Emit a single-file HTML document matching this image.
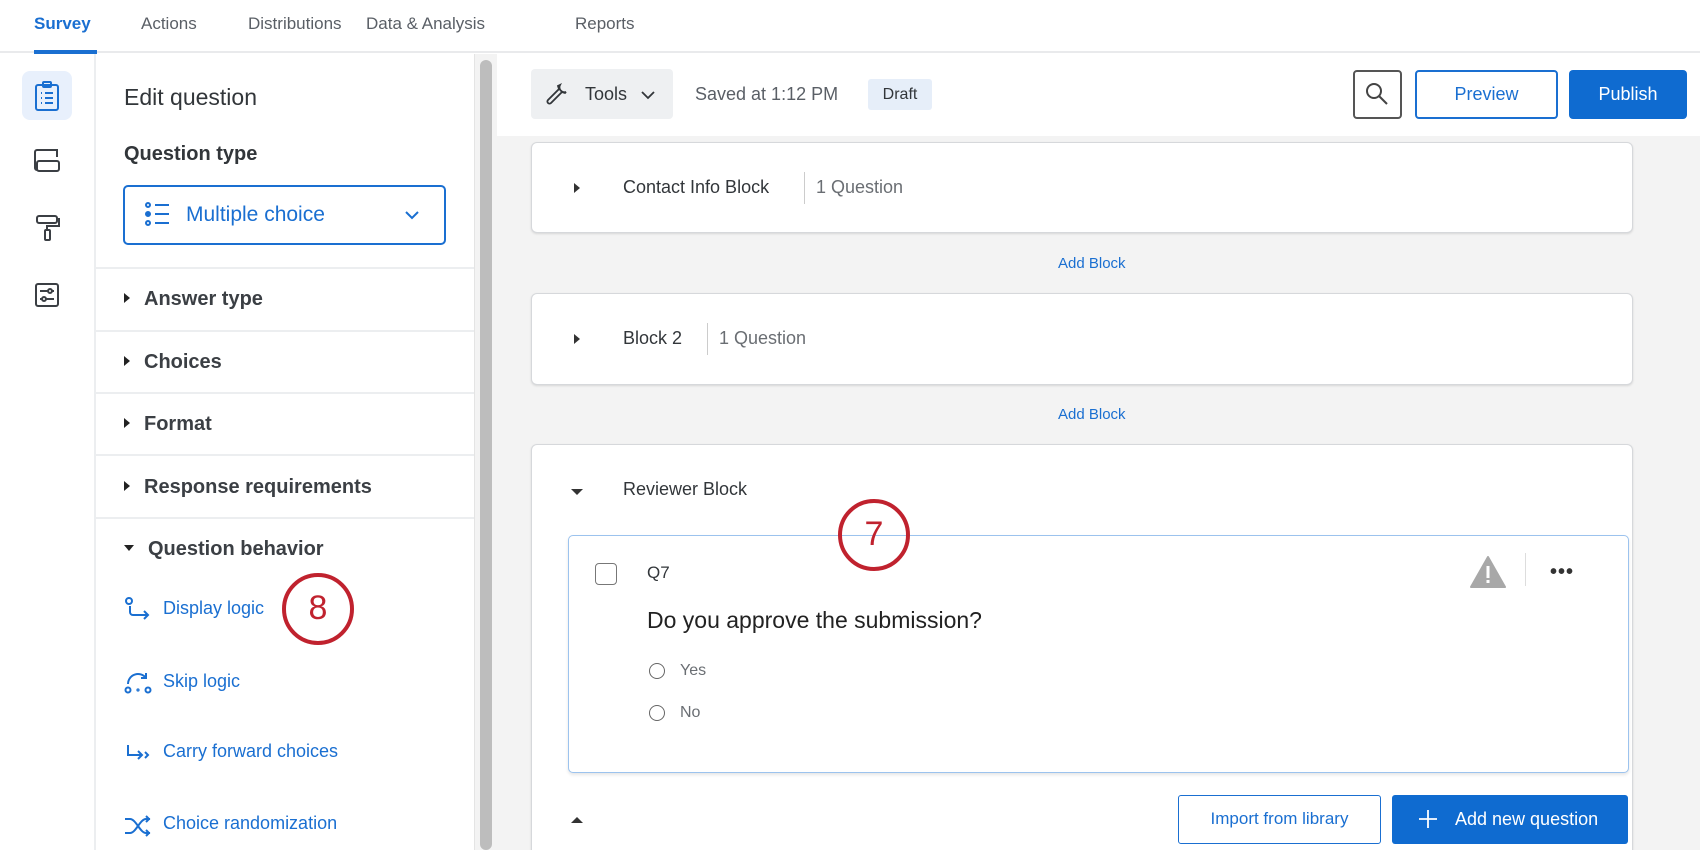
<!DOCTYPE html>
<html><head><meta charset="utf-8"><style>
*{box-sizing:border-box;margin:0;padding:0}
html,body{width:1700px;height:850px;overflow:hidden}
body{background:#fff;font-family:"Liberation Sans",sans-serif;color:#32363a;position:relative}
.a{position:absolute}
.tab{position:absolute;top:14px;font-size:17px;color:#5a5f66}
.blue{color:#1a6fd1}
.row{position:absolute;left:124px;font-size:20px;font-weight:bold;color:#3b3f44}
.tri{display:inline-block;width:0;height:0;border-top:5px solid transparent;border-bottom:5px solid transparent;border-left:6px solid #222;margin-right:14px;vertical-align:2px}
.sep{position:absolute;left:95px;width:379px;height:2px;background:#eceef0}
.link{position:absolute;left:163px;font-size:18px;color:#1a6fd1}
.block{position:absolute;left:531px;width:1102px;background:#fff;border:1px solid #d6d8db;border-radius:6px;box-shadow:0 1px 2px rgba(0,0,0,.12)}
.bt{position:absolute;font-size:18px;color:#32363a}
.addb{position:absolute;left:1058px;font-size:15px;color:#1a6fd1}
.circ{position:absolute;width:72px;height:72px;border:4px solid #c0222e;border-radius:50%;color:#c0222e;font-size:34px;text-align:center;line-height:62px;background:transparent}
</style></head><body>
<div class="a" style="left:0;top:0;width:1700px;height:53px;border-bottom:2px solid #e9eaec;background:#fff"></div>
<div class="tab" style="left:34px;color:#1a6fd1;font-weight:bold">Survey</div>
<div class="a" style="left:34px;top:50px;width:63px;height:4px;background:#1a6fd1"></div>
<div class="tab" style="left:141px">Actions</div>
<div class="tab" style="left:248px">Distributions</div>
<div class="tab" style="left:366px">Data &amp; Analysis</div>
<div class="tab" style="left:575px">Reports</div>
<div class="a" style="left:94px;top:54px;width:2px;height:796px;background:#eceef0"></div>
<div class="a" style="left:22px;top:71px;width:50px;height:49px;background:#e8f0fc;border-radius:8px"></div>
<svg class="a" style="left:34px;top:80px" width="26" height="32" viewBox="0 0 26 32" fill="none" stroke="#1a6fd1" stroke-width="2"><rect x="2" y="5" width="22" height="25" rx="2"/><rect x="9" y="2" width="8" height="5" rx="1"/><path d="M7 13h1M11 13h8M7 18h1M11 18h8M7 23h1M11 23h8"/></svg>
<svg class="a" style="left:33px;top:147px" width="28" height="28" viewBox="0 0 28 28" fill="none" stroke="#3b3f44" stroke-width="2"><path d="M24 10V3H4a2 2 0 0 0-2 2v16a2 2 0 0 0 2 2"/><rect x="4" y="14" width="22" height="10" rx="2"/></svg>
<svg class="a" style="left:35px;top:214px" width="26" height="28" viewBox="0 0 26 28" fill="none" stroke="#3b3f44" stroke-width="2"><rect x="2" y="2" width="20" height="7" rx="2"/><path d="M22 5h2v7H12v4"/><rect x="10" y="16" width="5" height="10" rx="1"/></svg>
<svg class="a" style="left:34px;top:282px" width="26" height="26" viewBox="0 0 26 26" fill="none" stroke="#3b3f44" stroke-width="2"><rect x="2" y="2" width="22" height="22" rx="2"/><path d="M6 9h14M6 17h14"/><circle cx="16" cy="9" r="2" fill="#fff"/><circle cx="10" cy="17" r="2" fill="#fff"/></svg>
<div class="a" style="left:124px;top:84px;font-size:23px;color:#32363a">Edit question</div>
<div class="a" style="left:124px;top:143px;font-size:20px;font-weight:bold;color:#32363a">Question type</div>
<div class="a" style="left:123px;top:185px;width:323px;height:60px;border:2px solid #1a6fd1;border-radius:5px"></div>
<svg class="a" style="left:144px;top:202px" width="28" height="24" viewBox="0 0 28 24" fill="none" stroke="#1a6fd1" stroke-width="2"><circle cx="4" cy="3" r="2"/><circle cx="4" cy="12" r="2" fill="#1a6fd1"/><circle cx="4" cy="21" r="2"/><path d="M11 3h14M11 12h14M11 21h14"/></svg>
<div class="a blue" style="left:186px;top:203px;font-size:21px">Multiple choice</div>
<svg class="a" style="left:404px;top:210px" width="16" height="10" viewBox="0 0 16 10" fill="none" stroke="#1a6fd1" stroke-width="2"><path d="M2 2l6 6 6-6"/></svg>
<div class="sep" style="top:267px"></div>
<div class="row" style="top:288px"><span class="tri"></span>Answer type</div>
<div class="sep" style="top:330px"></div>
<div class="row" style="top:351px"><span class="tri"></span>Choices</div>
<div class="sep" style="top:392px"></div>
<div class="row" style="top:413px"><span class="tri"></span>Format</div>
<div class="sep" style="top:454px"></div>
<div class="row" style="top:476px"><span class="tri"></span>Response requirements</div>
<div class="sep" style="top:517px"></div>
<div class="row" style="top:538px"><span class="tri" style="border-left:5px solid transparent;border-right:5px solid transparent;border-top:6px solid #222;border-bottom:0;vertical-align:4px"></span>Question behavior</div>
<svg class="a" style="left:125px;top:597px" width="26" height="24" viewBox="0 0 26 24" fill="none" stroke="#1a6fd1" stroke-width="2"><circle cx="4" cy="4" r="3"/><path d="M5 9v6a3 3 0 0 0 3 3h15M19 14l4 4-4 4"/></svg>
<div class="link" style="top:598px">Display logic</div>
<svg class="a" style="left:124px;top:670px" width="28" height="24" viewBox="0 0 28 24" fill="none" stroke="#1a6fd1" stroke-width="2"><circle cx="4" cy="20" r="2.5"/><circle cx="24" cy="20" r="2.5"/><circle cx="14" cy="20" r="0.6"/><path d="M4 14a10 10 0 0 1 18-6M22 3v5h-5"/></svg>
<div class="link" style="top:671px">Skip logic</div>
<svg class="a" style="left:125px;top:743px" width="28" height="20" viewBox="0 0 28 20" fill="none" stroke="#1a6fd1" stroke-width="2"><path d="M3 2v10h14M13 8l4 4-4 4M20 9l3 3-3 3"/></svg>
<div class="link" style="top:741px">Carry forward choices</div>
<svg class="a" style="left:124px;top:815px" width="28" height="22" viewBox="0 0 28 22" fill="none" stroke="#1a6fd1" stroke-width="2"><path d="M1 4h5c6 0 10 14 16 14h4M1 18h5c6 0 10-14 16-14h4M22 1l3 3-3 3M22 15l3 3-3 3"/></svg>
<div class="link" style="top:813px">Choice randomization</div>
<div class="circ" style="left:282px;top:573px">8</div>
<div class="a" style="left:474px;top:54px;width:23px;height:796px;background:#f3f3f3;border-left:1px solid #e4e4e4"></div>
<div class="a" style="left:480px;top:60px;width:12px;height:790px;background:#bdbdbd;border-radius:6px"></div>
<div class="a" style="left:497px;top:54px;width:1203px;height:796px;background:#f3f3f3"></div>
<div class="a" style="left:497px;top:54px;width:1203px;height:82px;background:#fff"></div>
<div class="a" style="left:531px;top:69px;width:142px;height:50px;background:#eef0f2;border-radius:4px"></div>
<svg class="a" style="left:546px;top:82px" width="24" height="24" viewBox="0 0 24 24" fill="none" stroke="#32363a" stroke-width="1.8"><path d="M14 3a5 5 0 0 0 6 7l-1 1-3-1L5 21a2 2 0 0 1-3-3L13 7l-1-3z"/></svg>
<div class="a" style="left:585px;top:84px;font-size:18px">Tools</div>
<svg class="a" style="left:641px;top:91px" width="14" height="9" viewBox="0 0 14 9" fill="none" stroke="#32363a" stroke-width="1.8"><path d="M1 1l6 6 6-6"/></svg>
<div class="a" style="left:695px;top:84px;font-size:18px;color:#5a5f66">Saved at 1:12 PM</div>
<div class="a" style="left:868px;top:79px;width:64px;height:31px;background:#e6eef9;border-radius:3px;font-size:16px;line-height:31px;text-align:center;color:#32363a">Draft</div>
<div class="a" style="left:1353px;top:70px;width:49px;height:49px;border:2px solid #555;border-radius:4px"></div>
<svg class="a" style="left:1364px;top:81px" width="26" height="26" viewBox="0 0 26 26" fill="none" stroke="#444" stroke-width="2"><circle cx="10" cy="10" r="7"/><path d="M15 15l8 8"/></svg>
<div class="a" style="left:1415px;top:70px;width:143px;height:49px;border:2px solid #1a6fd1;border-radius:4px;color:#1a6fd1;font-size:18px;line-height:45px;text-align:center">Preview</div>
<div class="a" style="left:1569px;top:70px;width:118px;height:49px;background:#0f6bd0;border-radius:4px;color:#fff;font-size:18px;line-height:49px;text-align:center">Publish</div>
<div class="block" style="top:142px;height:91px"></div>
<div class="a" style="left:574px;top:183px;border-top:5px solid transparent;border-bottom:5px solid transparent;border-left:6px solid #333"></div>
<div class="bt" style="left:623px;top:177px">Contact Info Block</div>
<div class="a" style="left:804px;top:172px;width:1px;height:32px;background:#ccc"></div>
<div class="bt" style="left:816px;top:177px;color:#6a6e73">1 Question</div>
<div class="addb" style="top:255px">Add Block</div>
<div class="block" style="top:293px;height:92px"></div>
<div class="a" style="left:574px;top:334px;border-top:5px solid transparent;border-bottom:5px solid transparent;border-left:6px solid #333"></div>
<div class="bt" style="left:623px;top:328px">Block 2</div>
<div class="a" style="left:707px;top:323px;width:1px;height:32px;background:#ccc"></div>
<div class="bt" style="left:719px;top:328px;color:#6a6e73">1 Question</div>
<div class="addb" style="top:406px">Add Block</div>
<div class="block" style="top:444px;height:406px;border-bottom:0;border-radius:6px 6px 0 0"></div>
<div class="a" style="left:571px;top:489px;border-left:6px solid transparent;border-right:6px solid transparent;border-top:6px solid #333"></div>
<div class="bt" style="left:623px;top:479px">Reviewer Block</div>
<div class="a" style="left:568px;top:535px;width:1061px;height:238px;border:1.5px solid #9cc3ee;border-radius:5px;background:#fff;box-shadow:0 2px 3px rgba(0,0,0,.1)"></div>
<div class="a" style="left:595px;top:563px;width:22px;height:22px;border:1.5px solid #777;border-radius:4px"></div>
<div class="a" style="left:647px;top:563px;font-size:17px;color:#32363a">Q7</div>
<svg class="a" style="left:1470px;top:555px" width="36" height="34" viewBox="0 0 36 34"><path d="M18 2L35 32H1z" fill="#a8a8a8" stroke="#a8a8a8" stroke-linejoin="round" stroke-width="2"/><rect x="16.5" y="11" width="3" height="12" fill="#fff"/><rect x="16.5" y="25" width="3" height="3" fill="#fff"/></svg>
<div class="a" style="left:1525px;top:553px;width:1px;height:33px;background:#ddd"></div>
<div class="a" style="left:1550px;top:568px;font-size:20px;font-weight:bold;letter-spacing:1px;line-height:8px;color:#333">•••</div>
<div class="a" style="left:647px;top:607px;font-size:23px;color:#222">Do you approve the submission?</div>
<div class="a" style="left:649px;top:663px;width:16px;height:16px;border:1.5px solid #666;border-radius:50%"></div>
<div class="a" style="left:680px;top:662px;font-size:16px;color:#6a6e73">Yes</div>
<div class="a" style="left:649px;top:705px;width:16px;height:16px;border:1.5px solid #666;border-radius:50%"></div>
<div class="a" style="left:680px;top:704px;font-size:16px;color:#6a6e73">No</div>
<div class="circ" style="left:838px;top:499px">7</div>
<div class="a" style="left:571px;top:817px;border-left:6px solid transparent;border-right:6px solid transparent;border-bottom:6px solid #333"></div>
<div class="a" style="left:1178px;top:795px;width:203px;height:49px;border:1.5px solid #1a6fd1;border-radius:3px;color:#1a6fd1;font-size:17px;line-height:46px;text-align:center">Import from library</div>
<div class="a" style="left:1392px;top:795px;width:236px;height:49px;background:#0f6bd0;border-radius:3px;color:#fff;font-size:18px;line-height:49px;padding-left:63px">Add new question</div>
<svg class="a" style="left:1418px;top:809px" width="20" height="20" viewBox="0 0 20 20" stroke="#fff" stroke-width="1.8"><path d="M10 1v18M1 10h18"/></svg>
</body></html>
